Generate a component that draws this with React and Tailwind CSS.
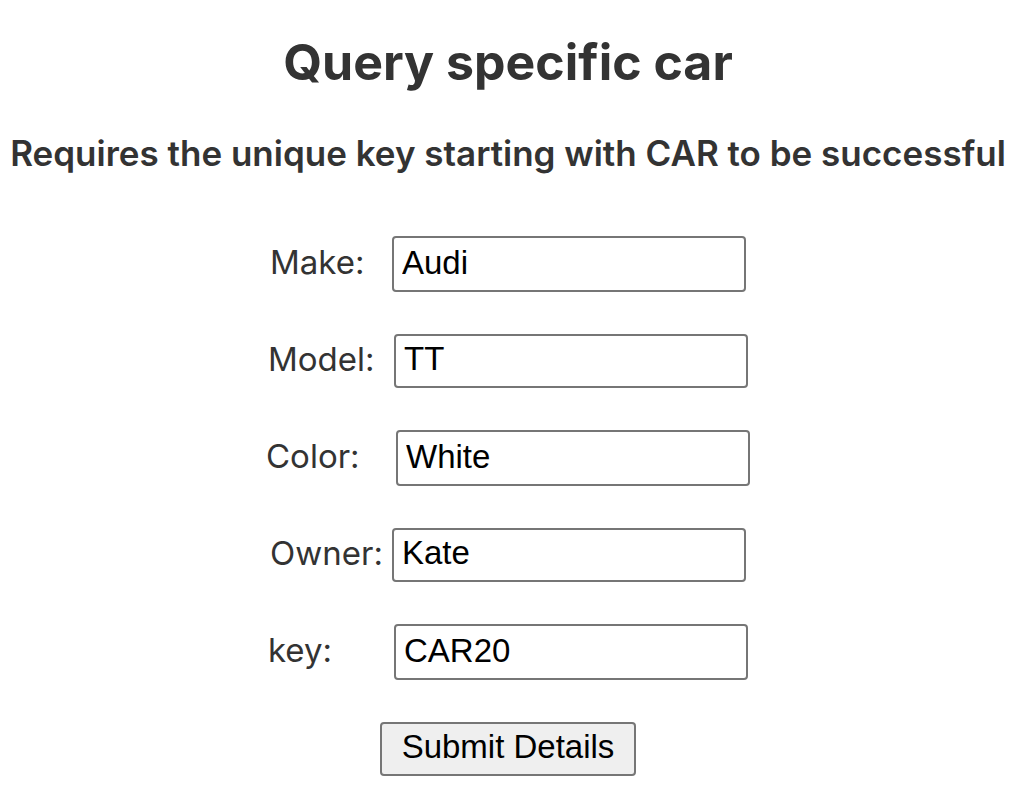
const fields = [
  { id: 'make', label: 'Make:', value: 'Audi', labelWidth: 'w-[122px]', box: 'h-14 pb-0.5' },
  { id: 'model', label: 'Model:', value: 'TT', labelWidth: 'w-[126px]', box: 'h-[54px] pb-1' },
  { id: 'color', label: 'Color:', value: 'White', labelWidth: 'w-[130px]', box: 'h-14 pb-0.5' },
  { id: 'owner', label: 'Owner:', value: 'Kate', labelWidth: 'w-[122px]', box: 'h-[54px] pb-1' },
  { id: 'key', label: 'key:', value: 'CAR20', labelWidth: 'w-[126px]', box: 'h-14 pb-0.5' },
];

export default function App() {
  return (
    <main className="flex min-h-screen flex-col items-center bg-white pr-1 font-['Inter',sans-serif] text-[#333333]">
      <h1 className="mt-8 text-center text-[50px] leading-[60px] font-bold">Query specific car</h1>
      <h2 className="mt-10 text-center text-[35px] leading-[42px] font-semibold">
        Requires the unique key starting with CAR to be successful
      </h2>
      <form className="mt-[62px] flex flex-col items-center" onSubmit={(e) => e.preventDefault()}>
        <div className="flex flex-col items-center gap-[42px]">
          {fields.map((f) => (
            <div key={f.id} className="flex items-center">
              <label htmlFor={f.id} className={`${f.labelWidth} pb-1 text-[33px] leading-[44px] whitespace-nowrap`}>
                {f.label}
              </label>
              <input
                id={f.id}
                type="text"
                defaultValue={f.value}
                className={`${f.box} w-[354px] rounded border-2 border-[#767676] bg-white px-2 font-['Liberation_Sans',sans-serif] text-[33px] text-black`}
              />
            </div>
          ))}
        </div>
        <button
          type="submit"
          className="mt-[42px] h-[54px] w-64 rounded border-2 border-[#767676] bg-[#efefef] pb-1 font-['Liberation_Sans',sans-serif] text-[33px] leading-[44px] text-black"
        >
          Submit Details
        </button>
      </form>
    </main>
  );
}
